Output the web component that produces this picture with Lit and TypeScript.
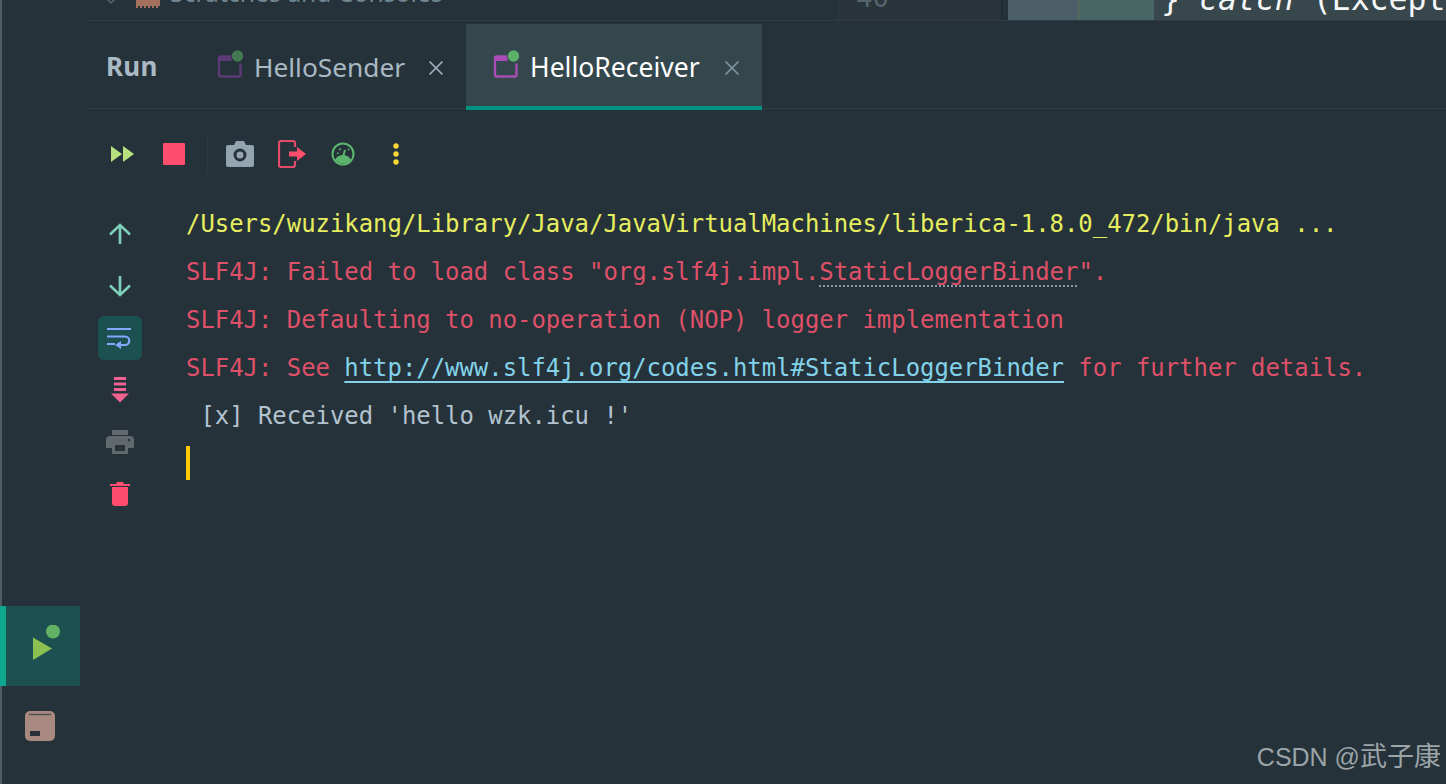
import { LitElement, html, css } from "lit";
import { customElement } from "lit/decorators.js";

const tabIcon = (main: string, dot: string) => html`<svg class="tabicon" width="26" height="30" viewBox="0 0 26 30">
  <path d="M14 6.500H3.500A1.500 1.500 0 0 0 2 8V25a1.500 1.500 0 0 0 1.500 1.500H22a1.500 1.500 0 0 0 1.500-1.500V13.500" fill="none" stroke="${main}" stroke-width="2.400"/>
  <path d="M2.500 7h12v4H2.500z" fill="${main}"/>
  <circle cx="20.500" cy="6" r="5.700" fill="${dot}"/>
</svg>`;

const closeX = (c: string) => html`<svg class="close" width="16" height="16" viewBox="0 0 16 16"><path d="M1.500 1.500l13 13M14.500 1.500l-13 13" stroke="${c}" stroke-width="1.700" fill="none"/></svg>`;

@customElement("app-root")
export class AppRoot extends LitElement {
  static styles = css`
    :host { display: block; width: 1446px; height: 784px; overflow: hidden; background: #263239; position: relative; font-family: "Noto Sans", sans-serif; }
    .page { display: grid; grid-template-columns: 84px 1fr; height: 784px; }
    .rail { border-left: 2px solid #4c5b64; display: flex; flex-direction: column; justify-content: flex-end; padding-bottom: 43px; box-sizing: border-box; }
    .runbtn { height: 80px; margin-bottom: 25px; background: #1d5050; border-left: 6px solid #0fa88f; margin-left: -2px; width: 80px; box-sizing: border-box; display: flex; align-items: center; padding-left: 22px; }
    .archive { margin-left: 23px; display: block; }
    .main { display: flex; flex-direction: column; min-width: 0; }
    .strip { height: 21px; display: grid; grid-template-columns: 754px 165px 5px 70px 76px 1fr; overflow: hidden; border-bottom: 1px solid #2e3b42; box-sizing: border-box; }
    .tree { display: flex; align-items: flex-end; color: #6f8791; font-size: 24.700px; line-height: 30px; height: 20px; padding-left: 21px; box-sizing: border-box; }
    .tree span { display: block; transform: translateY(-12px); white-space: nowrap; margin-left: 10px; }
    .chev { transform: translateY(-14px); margin-right: 19px; flex: none; }
    .scr { transform: translateY(-12px); flex: none; }
    .gutter { border-left: 1px solid #2c3840; border-right: 2px solid #222c33; background: #29343b; color: #54636c; font: 27.500px/30px "DejaVu Sans Mono", monospace; padding-left: 17px; box-sizing: border-box; }
    .gutter span { display: block; transform: translateY(-18px); }
    .a { background: #4c5f69; }
    .b { background: #486664; border-left: 1px solid #5d7052; }
    .code { background: #37474c; color: #f4f7f7; font: 31.500px/30px "DejaVu Sans Mono", monospace; padding-left: 7px; white-space: nowrap; overflow: hidden; }
    .code span { display: block; transform: translateY(-16px); }
    .code i { font-style: italic; }
    .tabs { display: flex; height: 85px; align-items: stretch; border-bottom: 1px solid #2e3b42; margin-top: 3px; box-sizing: border-box; font-size: 26.300px; }
    .runlabel { font-weight: 700; color: #a9bac5; padding-left: 22px; width: 110px; display: flex; align-items: center; box-sizing: border-box; letter-spacing: .3px; font-size: 26px; }
    .tab { display: flex; align-items: center; color: #a9b9c4; width: 272px; box-sizing: border-box; padding-left: 23px; padding-top: 1px; }
    .tabicon { margin-bottom: 3px; flex: none; }
    .tab .lbl { margin-left: 11px; margin-top: 2px; white-space: nowrap; line-height: 1; }
    .tab .close { margin-left: auto; margin-right: 22px; margin-top: 3px; }
    .tab.on { width: 296px; background: #34474c; color: #fff; padding: 0 0 1px 27px; height: 86px; box-shadow: inset 0 -4px 0 #009283; align-self: flex-start; position: relative; }
    .tab.on .lbl { font-size: 26.500px; }
    .toolbar { display: flex; align-items: center; height: 90px; position: relative; padding-left: 26px; }
    .toolbar svg { display: block; flex: none; }
    .sep { width: 1px; height: 36px; background: #2e3a42; margin: 0 18px 0 22px; }
    .body { display: grid; grid-template-columns: 102px 1fr; padding-top: 9px; }
    .side { display: flex; flex-direction: column; align-items: center; width: 72px; }
    .side .cell { height: 52px; display: flex; align-items: center; justify-content: center; width: 44px; flex: none; }
    .side .wrapbtn { height: 44px; background: #1c5152; border-radius: 6px; margin: 4px 0; }
    .console { font: 23.920px/48px "DejaVu Sans Mono", monospace; margin-top: -8px; }
    .line { height: 48px; white-space: pre; }
    .sys { color: #e6ee60; }
    .err { color: #df5069; }
    .out { color: #b3c2cf; }
    .dot { text-decoration: underline dotted #8d99a3; text-underline-offset: 5px; text-decoration-thickness: 2px; }
    a { color: #82d3ea; text-decoration: underline; text-underline-offset: 5px; text-decoration-thickness: 2px; }
    .caret { width: 4px; height: 34px; background: #ffcb05; margin-top: 6px; }
    .mark { position: absolute; right: 5px; top: 739px; color: #9ba4a9; font: 27px/36px "Liberation Sans", "Noto Sans CJK SC", sans-serif; white-space: nowrap; }
    .mark span { font-size: 25px; }
  `;

  render() {
    return html`<div class="page">
      <aside class="rail">
        <div class="runbtn">
          <svg width="40" height="42" viewBox="0 0 40 42"><path d="M5 12.500L24 23.500 5 35z" fill="#8cc152"/><circle cx="25" cy="6.500" r="7" fill="#62b266"/></svg>
        </div>
        <svg class="archive" width="30" height="30" viewBox="0 0 30 30">
          <rect width="30" height="30" rx="5" fill="#a98a81"/>
          <path d="M4 3.500h22" stroke="#4b4c4c" stroke-width="1.400"/>
          <rect x="5" y="20" width="10" height="5" fill="#2a3138"/>
        </svg>
      </aside>
      <main class="main">
        <div class="strip">
          <div class="tree">
            <svg class="chev" width="12" height="8" viewBox="0 0 12 8"><path d="M2 1l4 4 4-4" fill="none" stroke="#55656e" stroke-width="1.500"/></svg>
            <svg class="scr" width="24" height="8" viewBox="0 0 24 8"><rect width="24" height="6" fill="#a3705c"/><path d="M0 6h2v2H0zM4 6h2v2H4zM8 6h2v2H8zM12 6h2v2h-2zM16 6h2v2h-2zM20 6h2v2h-2z" fill="#a3705c"/></svg>
            <span>Scratches and Consoles</span>
          </div>
          <div class="gutter"><span>40</span></div>
          <div></div>
          <div class="a"></div>
          <div class="b"></div>
          <div class="code"><span>} <i>catch</i> (Except</span></div>
        </div>
        <div class="tabs">
          <div class="runlabel">Run</div>
          <div class="tab">${tabIcon("#5b3a75", "#437a52")}<span class="lbl">HelloSender</span>${closeX("#9fb0ba")}</div>
          <div class="tab on">${tabIcon("#a84db5", "#5cb06a")}<span class="lbl">HelloReceiver</span>${closeX("#80949e")}</div>
        </div>
        <div class="toolbar">
          <svg width="24" height="18" viewBox="0 0 24 18"><path d="M1 1l11 8-11 8zM13 1l11 8-11 8z" fill="#b8e07f"/></svg>
          <svg style="margin-left:29px" width="22" height="22" viewBox="0 0 22 22"><rect width="22" height="22" rx="1" fill="#ff4d6d"/></svg>
          <div class="sep"></div>
          <svg width="28" height="26" viewBox="0 0 28 26"><path d="M2 4h6l2-4h8l2 4h6a2 2 0 0 1 2 2v18a2 2 0 0 1-2 2H2a2 2 0 0 1-2-2V6a2 2 0 0 1 2-2z" fill="#93a5b1"/><circle cx="14" cy="14" r="5" fill="none" stroke="#27323a" stroke-width="3"/></svg>
          <svg style="margin-left:24px" width="28" height="28" viewBox="0 0 28 28"><path d="M17 7V3a2 2 0 0 0-2-2H3a2 2 0 0 0-2 2v22a2 2 0 0 0 2 2h12a2 2 0 0 0 2-2v-4" fill="none" stroke="#e44a69" stroke-width="2.200"/><path d="M11 11.500h8V7l9 7-9 7v-4.500h-8z" fill="#ff4d6d"/></svg>
          <svg style="margin-left:25px" width="24" height="24" viewBox="0 0 24 24"><circle cx="12" cy="12" r="10.500" fill="none" stroke="#5bb56c" stroke-width="2"/><path d="M4 17.500a9.500 9.500 0 0 1 16 0a10 10 0 0 1-16 0z" fill="#5bb56c"/><path d="M12 15l2-7" stroke="#5bb56c" stroke-width="2"/><path d="M6 11l1.500.500M8.500 6.500l1 1.500M17 8l1-1" stroke="#5bb56c" stroke-width="1.800"/></svg>
          <svg style="margin-left:37px" width="8" height="22" viewBox="0 0 8 22"><circle cx="4" cy="3" r="2.700" fill="#fdd835"/><circle cx="4" cy="11" r="2.700" fill="#fdd835"/><circle cx="4" cy="19" r="2.700" fill="#fdd835"/></svg>
        </div>
        <div class="body">
          <div class="side">
            <div class="cell"><svg width="24" height="22" viewBox="0 0 24 22"><path d="M12 21V2M2 11.500L12 2l10 9.500" fill="none" stroke="#7cd1b8" stroke-width="2.600"/></svg></div>
            <div class="cell"><svg width="24" height="22" viewBox="0 0 24 22"><path d="M12 1v19M2 10.500L12 20l10-9.500" fill="none" stroke="#7cd1b8" stroke-width="2.600"/></svg></div>
            <div class="cell wrapbtn"><svg width="26" height="22" viewBox="0 0 26 22"><path d="M0 2h24M0 9.500h18a4 4 0 0 1 0 8.500h-6M0 17h8" fill="none" stroke="#82aaff" stroke-width="2.200"/><path d="M14 14v8l-6-4z" fill="#82aaff"/></svg></div>
            <div class="cell"><svg width="20" height="26" viewBox="0 0 20 26"><path d="M4 0h12v3H4zM4 5.500h12v3H4zM4 11h12v3H4z" fill="#f06292"/><path d="M1 16.500h18L10 25.500z" fill="#f06292"/></svg></div>
            <div class="cell"><svg width="28" height="24" viewBox="0 0 28 24"><rect x="6" y="0" width="16" height="5" fill="#62696c"/><path d="M4 6h20a4 4 0 0 1 4 4v8h-6v6H6v-6H0v-8a4 4 0 0 1 4-4z" fill="#62696c"/><rect x="9" y="15" width="10" height="6" fill="#27323a"/><circle cx="23" cy="10" r="1.300" fill="#27323a"/></svg></div>
            <div class="cell"><svg width="20" height="24" viewBox="0 0 20 24"><path d="M7 0h6l1 2h6v2H0V2h6z" fill="#ff4d6d"/><path d="M2 5h16v16a3 3 0 0 1-3 3H5a3 3 0 0 1-3-3z" fill="#ff4d6d"/></svg></div>
          </div>
          <div class="console"><div class="line sys">/Users/wuzikang/Library/Java/JavaVirtualMachines/liberica-1.8.0_472/bin/java ...</div><div class="line err">SLF4J: Failed to load class "org.slf4j.impl.<span class="dot">StaticLoggerBinder</span>".</div><div class="line err">SLF4J: Defaulting to no-operation (NOP) logger implementation</div><div class="line err">SLF4J: See <a>http://www.slf4j.org/codes.html#StaticLoggerBinder</a> for further details.</div><div class="line out"> [x] Received 'hello wzk.icu !'</div><div class="caret"></div></div>
        </div>
      </main>
    </div>
    <div class="mark"><span>CSDN @</span>武子康</div>`;
  }
}
